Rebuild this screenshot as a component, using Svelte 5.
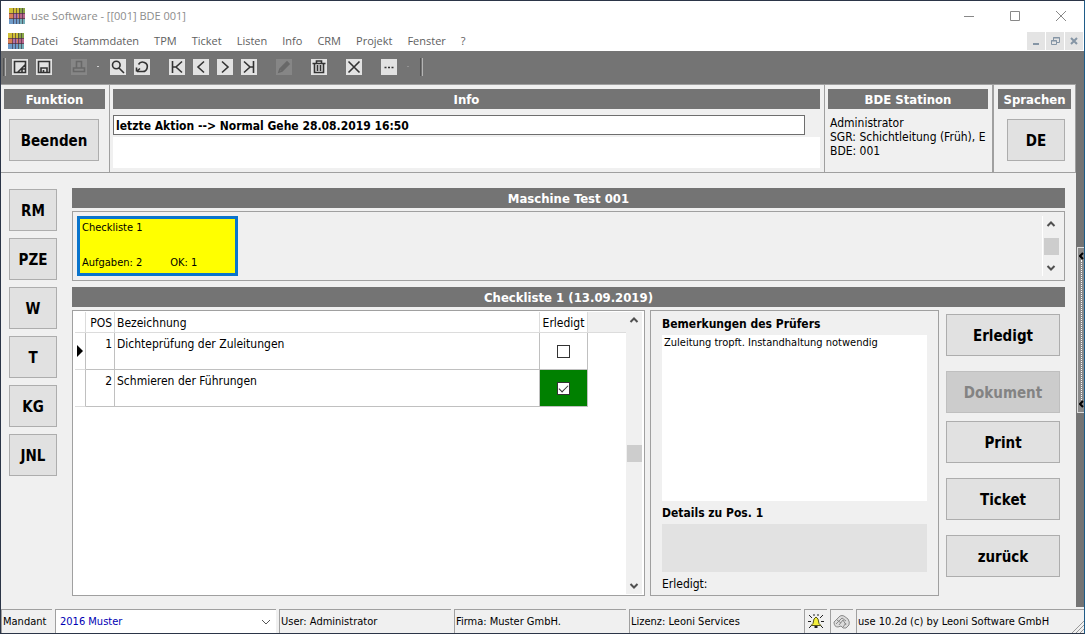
<script lang="ts">
  const menus = ["Datei", "Stammdaten", "TPM", "Ticket", "Listen", "Info", "CRM", "Projekt", "Fenster", "?"];

  // toolbar icons, grouped as they sit on the bar (16x16 paths)
  const tools = [
    [
      { name: "Neu", d: "M2.5 2.5H13.5V13.5H2.5ZM5.5 13.5L13.5 5.5M10 13.5V10H13.5" },
      { name: "Speichern", d: "M2.5 2.5H13.5V13.5H2.5ZM5 13.5V9H11V13.5M7.5 11V13.5" },
    ],
    [{ name: "Drucken", d: "M5.5 9V2.5H10.5V9M2.5 9H13.5V12.5H2.5Z", off: true, dot: true }],
    [
      { name: "Suchen", d: "M2.5 6A3.8 3.8 0 1 0 10.1 6A3.8 3.8 0 1 0 2.5 6M9 9L14 14" },
      { name: "Aktualisieren", d: "M4.5 5.5A4.7 4.7 0 1 1 8 12.5H3M2.5 8.5V12.5M2.5 12.5L6 9.5" },
    ],
    [
      { name: "Erster", d: "M3.5 2V14M13 2.5L7 8L13 13.5M4 8H7" },
      { name: "Voriger", d: "M11 2.5L5 8L11 13.5" },
      { name: "Nächster", d: "M5 2.5L11 8L5 13.5" },
      { name: "Letzter", d: "M12.5 2V14M3 2.5L9 8L3 13.5M9 8H12" },
    ],
    [{ name: "Bearbeiten", d: "M3 13L4 10L11 3L13 5L6 12ZM5 11L12 4", off: true }],
    [{ name: "Löschen", d: "M1.5 4.5H14.5M5.5 4V2H10.5V4M3.5 5V13.5H12.5V5M6.5 6V12M9.5 6V12" }],
    [{ name: "Abbrechen", d: "M2.5 2.5L13.5 13.5M13.5 2.5L2.5 13.5" }],
    [{ name: "Mehr", d: "M3.5 8.5H5.5M7 8.5H9M10.5 8.5H12.5", dot: true }],
  ];

  const modules = ["RM", "PZE", "W", "T", "KG", "JNL"];

  let rows = $state([
    { pos: 1, text: "Dichteprüfung der Zuleitungen", done: false },
    { pos: 2, text: "Schmieren der Führungen", done: true },
  ]);
  let selected = $state(1);
  let lastAction = $state("letzte Aktion --> Normal Gehe 28.08.2019 16:50");
  let remark = $state("Zuleitung tropft. Instandhaltung notwendig");
</script>

{#snippet logo()}
  <svg width="16" height="16" viewBox="0 0 16 16" aria-hidden="true">
    <rect width="16" height="5" fill="#d0bf35" />
    <rect y="5" width="16" height="6" fill="#d98058" />
    <rect y="11" width="16" height="5" fill="#6f9bc8" />
    <rect x="5" y="5" width="4" height="6" fill="#b070a8" />
    <rect x="10" width="6" height="5" fill="#8aa646" />
    <rect x="10" y="5" width="6" height="6" fill="#b8688e" />
    <rect x="10" y="11" width="6" height="5" fill="#74adb8" />
    <path d="M0 5.5H16M0 10.5H16M4.5 0V16M7.5 0V16M10.5 0V16M13.5 0V16" stroke="#3b2a3a" stroke-opacity="0.6" />
  </svg>
{/snippet}

{#snippet chevron(d: string)}
  <svg width="16" height="16" viewBox="0 0 16 16" aria-hidden="true">
    <path {d} fill="none" stroke="#505050" stroke-width="2" />
  </svg>
{/snippet}

{#snippet scrollbar(kind: string)}
  <div class="scrollbar {kind}">
    {@render chevron("M4.5 10L8 6.5L11.5 10")}
    <span class="thumb"></span>
    {@render chevron("M4.5 6L8 9.5L11.5 6")}
  </div>
{/snippet}

<div class="window">
  <header class="titlebar">
    {@render logo()}
    <span class="title">use Software - [[001] BDE 001]</span>
    <button class="sys" aria-label="Minimieren">
      <svg width="12" height="12" viewBox="0 0 12 12"><path d="M1 6.5H11" /></svg>
    </button>
    <button class="sys" aria-label="Maximieren">
      <svg width="12" height="12" viewBox="0 0 12 12"><path d="M1.5 1.5H10.5V10.5H1.5Z" /></svg>
    </button>
    <button class="sys" aria-label="Schließen">
      <svg width="12" height="12" viewBox="0 0 12 12"><path d="M1 1L11 11M11 1L1 11" /></svg>
    </button>
  </header>

  <nav class="menubar">
    {@render logo()}
    {#each menus as menu}
      <button class="menu">{menu}</button>
    {/each}
    <div class="mdi">
      <button aria-label="Fenster minimieren">
        <svg width="10" height="10" viewBox="0 0 10 10"><path d="M2 8H8" stroke-width="2" /></svg>
      </button>
      <button aria-label="Fenster wiederherstellen">
        <svg width="10" height="10" viewBox="0 0 10 10"><path d="M3.5 4V1.5H9.5V6.5H7M3 2H10M1.5 4.5H6.5V8.5H1.5ZM1 5H7" /></svg>
      </button>
      <button aria-label="Fenster schließen">
        <svg width="10" height="10" viewBox="0 0 10 10"><path d="M2 2L8 8M8 2L2 8" stroke-width="2" /></svg>
      </button>
    </div>
  </nav>

  <div class="toolbar">
    <span class="grip"></span>
    {#each tools as group}
      <div class="group">
        {#each group as tool}
          <button class="tool" class:off={tool.off} disabled={tool.off} aria-label={tool.name}>
            <svg width="16" height="16" viewBox="0 0 16 16"><path d={tool.d} /></svg>
          </button>
          {#if tool.dot}<span class="dot" class:dim={!tool.off}></span>{/if}
        {/each}
      </div>
    {/each}
    <span class="grip"></span>
  </div>

  <div class="body">
    <div class="content">
      <div class="panels">
        <section class="panel funktion">
          <h2>Funktion</h2>
          <button class="big">Beenden</button>
        </section>
        <section class="panel info">
          <h2>Info</h2>
          <div class="log">
            <div class="line">
              <input type="text" aria-label="Letzte Aktion" bind:value={lastAction} />
            </div>
          </div>
        </section>
        <section class="panel station">
          <h2>BDE Statinon</h2>
          <p>Administrator<br />SGR: Schichtleitung (Früh), E<br />BDE: 001</p>
        </section>
        <section class="panel sprachen">
          <h2>Sprachen</h2>
          <button class="big">DE</button>
        </section>
      </div>

      <div class="work">
        <nav class="modules">
          {#each modules as name}
            <button class="big">{name}</button>
          {/each}
        </nav>

        <main>
          <h2>Maschine Test 001</h2>
          <div class="lists">
            <button class="card">
              <span>Checkliste 1</span>
              <span class="counts"><span>Aufgaben: 2</span><span>OK: 1</span></span>
            </button>
            {@render scrollbar("short")}
          </div>

          <h2>Checkliste 1 (13.09.2019)</h2>
          <div class="detail">
            <div class="grid">
              <div class="sheet">
                <table>
                  <thead>
                    <tr>
                      <th class="mark"></th>
                      <th class="pos">POS</th>
                      <th class="text">Bezeichnung</th>
                      <th class="check">Erledigt</th>
                      <th class="rest"></th>
                    </tr>
                  </thead>
                  <tbody>
                    {#each rows as row}
                      <tr onclick={() => (selected = row.pos)}>
                        <td class="mark">
                          {#if row.pos === selected}
                            <svg width="6" height="12" viewBox="0 0 6 12"><path d="M0 0L6 6L0 12Z" /></svg>
                          {/if}
                        </td>
                        <td class="pos">{row.pos}</td>
                        <td class="text">{row.text}</td>
                        <td class="check" class:done={row.done}>
                          <input type="checkbox" aria-label="{row.text} erledigt" bind:checked={row.done} />
                        </td>
                        <td class="rest"></td>
                      </tr>
                    {/each}
                  </tbody>
                </table>
              </div>
              {@render scrollbar("tall")}
            </div>

            <div class="notes">
              <label for="remark">Bemerkungen des Prüfers</label>
              <textarea id="remark" bind:value={remark}></textarea>
              <h3>Details zu Pos. {selected}</h3>
              <div class="blank"></div>
              <p>Erledigt:</p>
            </div>

            <div class="actions">
              <button class="big">Erledigt</button>
              <button class="big" disabled>Dokument</button>
              <button class="big print">Print</button>
              <button class="big">Ticket</button>
              <button class="big">zurück</button>
            </div>
          </div>
        </main>
      </div>
    </div>

    <div class="edge">
      <button class="splitter" aria-label="Seitenleiste einblenden">
        <svg width="5" height="8" viewBox="0 0 5 8"><path d="M4 1L1 4L4 7" /></svg>
        <span class="dots"></span>
        <svg width="5" height="8" viewBox="0 0 5 8"><path d="M4 1L1 4L4 7" /></svg>
      </button>
    </div>
  </div>

  <footer class="statusbar">
    <label class="cell mandant" for="mandant">Mandant</label>
    <div class="cell choice">
      <select id="mandant">
        <option>2016 Muster</option>
      </select>
      <svg width="10" height="6" viewBox="0 0 10 6" aria-hidden="true">
        <path d="M1 1L5 5L9 1" fill="none" stroke="#555" />
      </svg>
    </div>
    <span class="cell fixed">User: Administrator</span>
    <span class="cell fixed">Firma: Muster GmbH.</span>
    <span class="cell fixed">Lizenz: Leoni Services</span>
    <span class="cell icon">
      <svg width="16" height="16" viewBox="0 0 16 16" aria-hidden="true">
        <path d="M1 1L4 4M15 1L12 4M0 7.5H3M13 7.5H16M1 14L3 12M15 14L13 12M6 0V2M10 0V2" stroke="#222" />
        <path d="M3 11.5L5 9.5L6 5L8 3L10 5L11 9.5L13 11.5Z" fill="#f4f03c" stroke="#55551c" />
        <path d="M6.5 13H9.5" stroke="#222" stroke-width="2" />
      </svg>
    </span>
    <span class="cell icon">
      <svg width="18" height="16" viewBox="0 0 18 16" aria-hidden="true">
        <path d="M1 8L7 2Q9 1 11 2L15 5Q17 8 16 11L13 14H10L8 12L5 13Q1 13 1 8Z" fill="#dcdcdc" stroke="#8a8a8a" />
        <path d="M3 10L9 4L13 7M6 11L10 6L13 11M10 13L13 9M4 6L8 9" fill="none" stroke="#8a8a8a" />
      </svg>
    </span>
    <span class="cell version">use 10.2d (c) by Leoni Software GmbH
      <svg width="12" height="12" viewBox="0 0 12 12" aria-hidden="true">
        <path d="M0 12L12 0M4 12L12 4M8 12L12 8" stroke="#999" />
      </svg>
    </span>
  </footer>
</div>

<style>
  :global(body) {
    background: #f0f0f0;
  }

  .window {
    display: flex;
    flex-direction: column;
    box-sizing: border-box;
    min-height: 100vh;
    border: 1px solid #2b3547;
    border-right-color: #1f5c88;
    background: #f0f0f0;
    color: #000;
    font: 12px/14px "DejaVu Sans Condensed", "DejaVu Sans", sans-serif;
  }

  .window :global(*) {
    box-sizing: border-box;
  }

  button,
  input,
  select,
  textarea {
    margin: 0;
    padding: 0;
    border: 0;
    border-radius: 0;
    background: none;
    color: inherit;
    font: inherit;
  }

  svg {
    display: block;
    flex: none;
  }

  h2,
  h3,
  p {
    margin: 0;
  }

  h2 {
    height: 20px;
    background: #747474;
    color: #fff;
    font-size: 13px;
    line-height: 22px;
    text-align: center;
    white-space: nowrap;
  }

  .titlebar,
  .menubar {
    display: flex;
    align-items: center;
    background: #fff;
    font-family: "Open Sans", sans-serif;
    font-size: 11px;
  }

  .titlebar {
    height: 30px;
    padding-left: 8px;
    color: #8c8c8c;
  }

  .title {
    flex: 1;
    padding-left: 6px;
  }

  .sys {
    display: grid;
    place-items: center;
    width: 46px;
    height: 30px;
  }

  .sys path {
    fill: none;
    stroke: #888;
  }

  .menubar {
    height: 20px;
    padding: 0 1px 0 7px;
    color: #606060;
  }

  .menu {
    padding: 0 8px 0 7px;
  }

  .mdi {
    display: flex;
    gap: 1px;
    margin-left: auto;
  }

  .mdi button {
    display: grid;
    place-items: center;
    width: 18px;
    height: 18px;
    background: #e4e4e4;
  }

  .mdi path {
    fill: none;
    stroke: #8595a5;
  }

  .toolbar {
    display: flex;
    align-items: center;
    gap: 19px;
    height: 33px;
    padding: 0 0 2px 2px;
    background: #747474;
  }

  .grip {
    width: 3px;
    height: 18px;
    border: 1px solid #555;
    border-width: 0 1px;
    border-right-color: #b4b4b4;
  }

  .grip:first-child {
    margin-right: -13px;
  }

  .group {
    display: flex;
    align-items: center;
    gap: 8px;
  }

  .tool {
    width: 16px;
    height: 16px;
    background: #e2e2e2;
  }

  .tool path {
    fill: none;
    stroke: #333;
    stroke-width: 1.6;
  }

  .tool.off {
    background: #868686;
  }

  .tool.off path {
    stroke: #686868;
  }

  .dot {
    width: 2px;
    height: 1px;
    margin: 0 -8px 0 2px;
    background: #d0d0d0;
  }

  .dot.dim {
    background: #929292;
  }

  .body {
    display: flex;
    flex: 1;
  }

  .content {
    display: flex;
    flex: 1;
    flex-direction: column;
    min-width: 0;
    border-top: 1px solid #a0a0a0;
  }

  .panels {
    display: flex;
    height: 88px;
    border-bottom: 1px solid #a0a0a0;
  }

  .panel {
    padding: 4px 4px 4px 3px;
    border-right: 1px solid #a0a0a0;
  }

  .funktion {
    width: 109px;
  }

  .info {
    flex: 1;
    min-width: 0;
  }

  .station {
    width: 169px;
    border-right-width: 2px;
  }

  .sprachen {
    width: 82px;
    padding-left: 4px;
  }

  .big {
    display: block;
    height: 42px;
    padding-top: 2px;
    border: 1px solid #adadad;
    background: #e1e1e1;
    font-size: 15px;
    font-weight: bold;
  }

  .big:disabled {
    border-color: #bfbfbf;
    background: #cccccc;
    color: #838383;
  }

  .funktion .big {
    width: 90px;
    margin: 10px 5px;
  }

  .sprachen .big {
    width: 58px;
    margin: 10px 6px 10px auto;
  }

  .log {
    height: 53px;
    margin-top: 6px;
    background: #fff;
  }

  .line {
    height: 22px;
    padding-right: 15px;
    background: #f0f0f0;
  }

  .line input {
    display: block;
    width: 100%;
    height: 20px;
    padding: 2px 2px 0;
    border: 1px solid #6e6e6e;
    background: #fff;
    font-weight: bold;
  }

  .station p {
    margin-top: 7px;
    padding-left: 2px;
    white-space: nowrap;
  }

  .work {
    display: flex;
    flex: 1;
    gap: 15px;
    padding: 15px 11px 11px 8px;
  }

  .modules {
    display: flex;
    flex-direction: column;
    gap: 7px;
    width: 48px;
    padding-top: 1px;
  }

  main {
    display: flex;
    flex: 1;
    flex-direction: column;
    min-width: 0;
  }

  .lists {
    display: flex;
    justify-content: space-between;
    height: 70px;
    margin: 3px 0 6px;
    padding: 4px 5px 4px 4px;
    border: 1px solid #a0a0a0;
  }

  .card {
    display: flex;
    flex-direction: column;
    justify-content: space-between;
    width: 161px;
    height: 60px;
    padding: 2px 2px 3px;
    border: 3px solid #0a74cc;
    background: #ff0;
    font-size: 11px;
    text-align: left;
  }

  .counts {
    display: flex;
    gap: 28px;
  }

  .scrollbar {
    display: flex;
    flex: none;
    flex-direction: column;
    align-items: center;
    justify-content: space-between;
    width: 16px;
    background: #f0f0f0;
  }

  .thumb {
    width: 15px;
    height: 17px;
    background: #cdcdcd;
  }

  .short {
    width: 17px;
    border-left: 1px solid #fff;
  }

  .detail {
    display: flex;
    flex: 1;
    margin-top: 3px;
  }

  .grid {
    display: flex;
    flex: 1;
    min-width: 0;
    padding: 1px 2px 1px 1px;
    border: 1px solid #a0a0a0;
    background: #fff;
  }

  .sheet {
    flex: 1;
    padding-left: 1px;
  }

  table {
    width: 100%;
    border-collapse: separate;
    border-spacing: 0;
    table-layout: fixed;
  }

  th,
  td {
    padding: 0 2px;
    border: 1px solid #c0c0c0;
    border-width: 0 1px 1px 0;
    font-weight: normal;
    text-align: left;
    vertical-align: top;
  }

  th {
    height: 21px;
    padding-top: 4px;
    border-color: #dcdcdc;
  }

  td {
    height: 37px;
    padding-top: 4px;
  }

  .mark {
    width: 11px;
    padding-right: 0;
  }

  td.mark {
    padding-top: 12px;
    border-bottom-color: #dcdcdc;
  }

  .pos {
    width: 29px;
    text-align: right;
  }

  .check {
    width: 48px;
    text-align: center;
  }

  td.check {
    padding-top: 0;
    vertical-align: middle;
  }

  .done {
    background: #008000;
  }

  .rest {
    width: 38px;
  }

  th.rest {
    border-right: 0;
    background: #f0f0f0;
  }

  td.rest {
    border: 0;
  }

  td input {
    display: block;
    width: 13px;
    height: 13px;
    margin: 0 auto;
    border: 1px solid #333;
    background: #fff;
    appearance: none;
  }

  td input:checked::before {
    display: block;
    width: 9px;
    height: 5px;
    margin: 2px 1px;
    border: solid #333;
    border-width: 0 0 1px 1px;
    box-sizing: border-box;
    content: "";
    transform: rotate(-45deg);
  }

  .notes {
    display: flex;
    flex-direction: column;
    width: 289px;
    margin-left: 5px;
    padding: 5px 11px;
    border: 1px solid #a0a0a0;
  }

  .notes label,
  h3 {
    font-size: 12px;
    font-weight: bold;
    line-height: 16px;
  }

  textarea {
    flex: 1;
    min-height: 120px;
    margin: 3px 0 4px;
    padding: 1px 2px;
    outline: 0;
    background: #fff;
    font-size: 11px;
    resize: none;
  }

  .blank {
    height: 48px;
    margin: 3px 0 5px;
    background: #e2e2e2;
  }

  .notes p {
    margin-bottom: -1px;
  }

  .actions {
    display: flex;
    flex-direction: column;
    gap: 15px;
    width: 126px;
    padding: 4px 5px 0 7px;
  }

  .print {
    margin-top: -7px;
  }

  .edge {
    display: flex;
    align-items: center;
    width: 8px;
    padding: 0 0 32px 1px;
    background: #747474;
  }

  .splitter {
    display: flex;
    flex-direction: column;
    align-items: center;
    width: 7px;
    height: 166px;
    padding: 4px 0;
    border: 1px solid #ddd;
    border-right: 0;
    background: #8a8a8a;
  }

  .splitter path {
    fill: none;
    stroke: #000;
    stroke-width: 2;
  }

  .dots {
    flex: 1;
    border-left: 1px dotted #fff;
  }

  .statusbar {
    display: flex;
    gap: 3px;
    height: 26px;
    padding-top: 2px;
    font-size: 11px;
  }

  .cell {
    display: flex;
    flex: none;
    align-items: center;
    padding-left: 1px;
    border: 1px solid #a0a0a0;
    border-width: 1px 0 0 1px;
    white-space: nowrap;
  }

  .mandant {
    width: 51px;
  }

  .choice {
    gap: 4px;
    width: 221px;
    padding: 0 5px 0 4px;
    background: #fff;
    color: #0000b4;
  }

  select {
    flex: 1;
    appearance: none;
  }

  .fixed {
    width: 172px;
  }

  .icon {
    justify-content: center;
    width: 23px;
    padding: 0;
  }

  .version {
    flex: 1;
    justify-content: space-between;
  }

  .version svg {
    align-self: flex-end;
  }
</style>
